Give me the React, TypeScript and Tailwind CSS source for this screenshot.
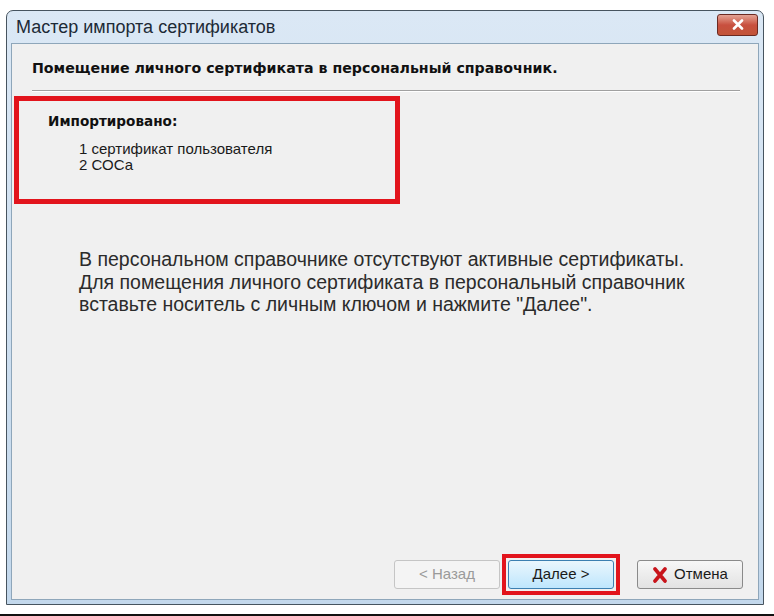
import React from 'react'

function Btn({ label, disabled, icon }: { label: string; disabled?: boolean; icon?: React.ReactNode }) {
    return (
        <div
            className={
                "w-[106px] h-[29px] flex items-center justify-center gap-[6px] rounded-[3px] border text-[15px] " +
                (disabled
                    ? "border-[#c5c5c5] bg-[#f4f4f4] text-[#9a9a9a]"
                    : "border-[#8a8a8a] bg-gradient-to-b from-[#f7f7f7] to-[#e2e2e2] text-[#1a1a1a]")
            }
        >
            {icon}
            <span>{label}</span>
        </div>
    )
}

export default function App() {
    return (
        <div className="w-[774px] h-[616px] bg-white flex flex-col" style={{ fontFamily: '"Liberation Sans", Arial, sans-serif' }}>
            <div className="h-[616px] pt-[10px] pl-[6px] pr-[10px] pb-[9px] border-b-2 border-[#111]">
                {/* window frame */}
                <div className="h-full flex flex-col rounded-t-[7px] border border-[#47545f] bg-gradient-to-b from-[#dbe8f5] to-[#c3d8ec]">
                    <div className="h-[32px] flex items-center justify-between pl-[9px] pr-[5px]">
                        <span className="text-[18px] text-[#1d2a36]">Мастер импорта сертификатов</span>
                        <div className="w-[41px] h-[22px] -mt-[5px] rounded-[3px] border border-[#6b2a22] bg-gradient-to-b from-[#e3a294] via-[#c8503f] to-[#c25438] flex items-center justify-center">
                            <svg width="12" height="11" viewBox="0 0 12 11">
                                <path d="M2 1.5 L10 9.5 M10 1.5 L2 9.5" stroke="#fff" strokeWidth="2.6" strokeLinecap="round" />
                            </svg>
                        </div>
                    </div>
                    <div className="flex-1 mx-[4px] mb-[4px] border border-[#8ea6ba] bg-[#f0f0f0] flex flex-col">
                        <div className="pl-[20px] pr-[18px] pt-[14px]">
                            <div className="text-[14.2px] font-bold text-[#111]" style={{ fontFamily: '"DejaVu Sans", sans-serif' }}>
                                Помещение личного сертификата в персональный справочник.
                            </div>
                            <div className="mt-[11px] h-[2px] border-t border-[#a0a0a0] border-b-white border-b" />
                        </div>
                        <div className="ml-[2px] mt-[4px] w-[386px] h-[108px] border-[5px] border-[#e2141c] pl-[29px] pt-[10px]">
                            <div className="text-[13.6px] font-bold text-[#111]" style={{ fontFamily: '"DejaVu Sans", sans-serif' }}>Импортировано:</div>
                            <div className="mt-[9px] pl-[31px] text-[15px] leading-[16px] text-[#1a1a1a]">
                                <div>1 сертификат пользователя</div>
                                <div>2 СОСа</div>
                            </div>
                        </div>
                        <div className="mt-[44px] pl-[67px] text-[19.5px] leading-[22.5px] text-[#2b2b2b]">
                            <div>В персональном справочнике отсутствуют активные сертификаты.</div>
                            <div>Для помещения личного сертификата в персональный справочник</div>
                            <div>вставьте носитель с личным ключом и нажмите "Далее".</div>
                        </div>
                        <div className="mt-auto mb-[4px] flex items-center justify-end pr-[15px]">
                            <Btn label="< Назад" disabled />
                            <div className="ml-[2px] border-[4px] border-[#e2141c] p-[2px]">
                                <div className="w-[106px] h-[29px] flex items-center justify-center rounded-[3px] border border-[#3c7fb1] bg-gradient-to-b from-[#eaf6fd] to-[#bee6fd] text-[15px] text-[#1a1a1a]">
                                    Далее &gt;
                                </div>
                            </div>
                            <div className="ml-[17px]">
                                <Btn
                                    label="Отмена"
                                    icon={
                                        <svg width="16" height="16" viewBox="0 0 16 16">
                                            <path d="M3 2 L13 14 M13 2 L3 14" stroke="#c8141b" strokeWidth="3.6" strokeLinecap="round" />
                                        </svg>
                                    }
                                />
                            </div>
                        </div>
                    </div>
                </div>
            </div>
        </div>
    )
}
